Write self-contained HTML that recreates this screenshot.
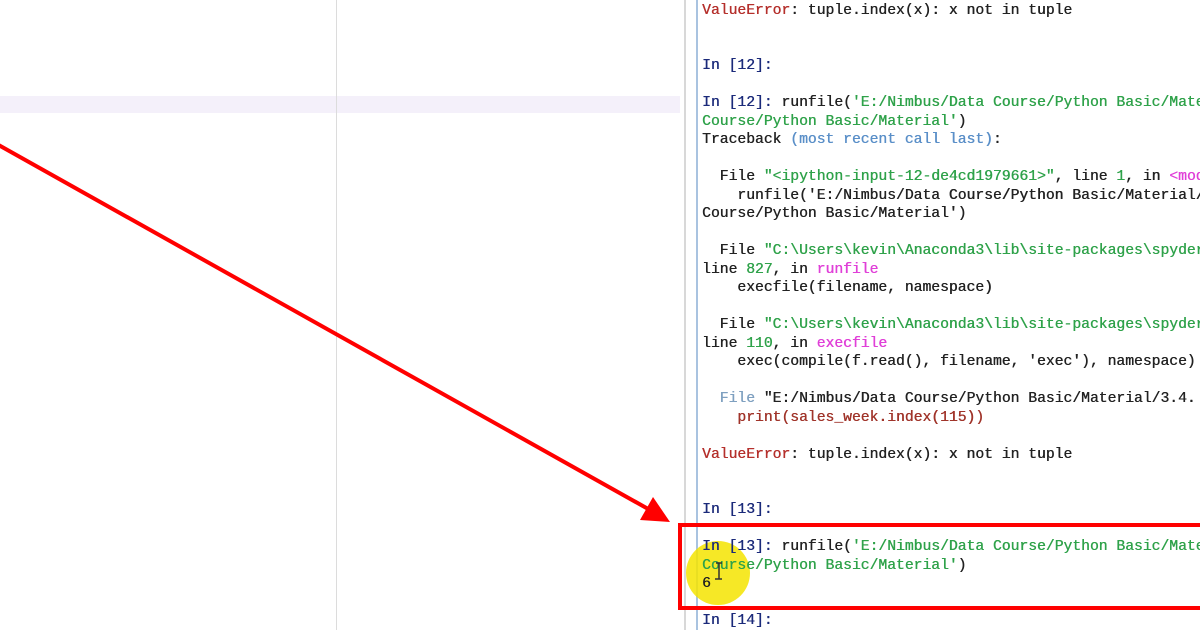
<!DOCTYPE html>
<html><head><meta charset="utf-8"><style>
html,body{margin:0;padding:0;width:1200px;height:630px;overflow:hidden;background:#fff;}
.wrap{position:absolute;left:0;top:0;width:1200px;height:630px;overflow:hidden;}
.band{position:absolute;left:0;top:96px;width:680px;height:17px;background:#f4f0fa;}
.vl{position:absolute;left:336px;top:0;width:1px;height:630px;background:#dcdcdc;}
.d1{position:absolute;left:684px;top:0;width:2px;height:630px;background:#d8d8d8;}
.d2{position:absolute;left:696px;top:0;width:2px;height:630px;background:#a9c3e0;}
.tc{position:absolute;left:702px;top:0;width:498px;height:630px;overflow:hidden;}
pre{position:absolute;left:0;top:1.5px;margin:0;font-family:"Liberation Mono",monospace;font-size:14.7px;line-height:18.5px;color:#222;white-space:pre;text-shadow:0.4px 0 0 currentColor;}
.e{color:#b5302c}.p{color:#1b2a7a}.g{color:#2fa24a}.m{color:#e040d8}.b{color:#5a8fc8}.r{color:#a0342a}.gr{color:#7fa0c0}
.circ{position:absolute;left:686px;top:541px;width:64px;height:64px;border-radius:50%;background:rgba(245,228,0,0.85);}
.box{position:absolute;left:678px;top:523px;width:540px;height:79px;border:4px solid #f00;}
svg{position:absolute;left:0;top:0;}
</style></head><body><div class="wrap">
<div class="band"></div><div class="vl"></div><div class="d1"></div><div class="d2"></div>
<div class="circ"></div>
<div class="tc"><pre><span class="e">ValueError</span>: tuple.index(x): x not in tuple


<span class="p">In [12]:</span>

<span class="p">In [12]:</span> runfile(<span class="g">'E:/Nimbus/Data Course/Python Basic/Materia</span>
<span class="g">Course/Python Basic/Material'</span>)
Traceback <span class="b">(most recent call last)</span>:

  File <span class="g">"&lt;ipython-input-12-de4cd1979661&gt;"</span>, line <span class="g">1</span>, in <span class="m">&lt;modu</span>
    runfile('E:/Nimbus/Data Course/Python Basic/Material/3
Course/Python Basic/Material')

  File <span class="g">"C:\Users\kevin\Anaconda3\lib\site-packages\spyder</span>
line <span class="g">827</span>, in <span class="m">runfile</span>
    execfile(filename, namespace)

  File <span class="g">"C:\Users\kevin\Anaconda3\lib\site-packages\spyder</span>
line <span class="g">110</span>, in <span class="m">execfile</span>
    exec(compile(f.read(), filename, 'exec'), namespace)

  <span class="gr">File</span> "E:/Nimbus/Data Course/Python Basic/Material/3.4.
    <span class="r">print(sales_week.index(115))</span>

<span class="e">ValueError</span>: tuple.index(x): x not in tuple


<span class="p">In [13]:</span>

<span class="p">In [13]:</span> runfile(<span class="g">'E:/Nimbus/Data Course/Python Basic/Materia</span>
<span class="g">Course/Python Basic/Material'</span>)
6

<span class="p">In [14]:</span></pre></div>
<div class="box"></div>
<svg width="1200" height="630"><line x1="-5" y1="143" x2="650" y2="510" stroke="#f00" stroke-width="4"/><polygon points="670,522 640,520 653,497" fill="#f00"/><path d="M716 563h6M719 563v16M715 579h7" stroke="#333" stroke-width="1.5" fill="none"/></svg>
</div></body></html>
